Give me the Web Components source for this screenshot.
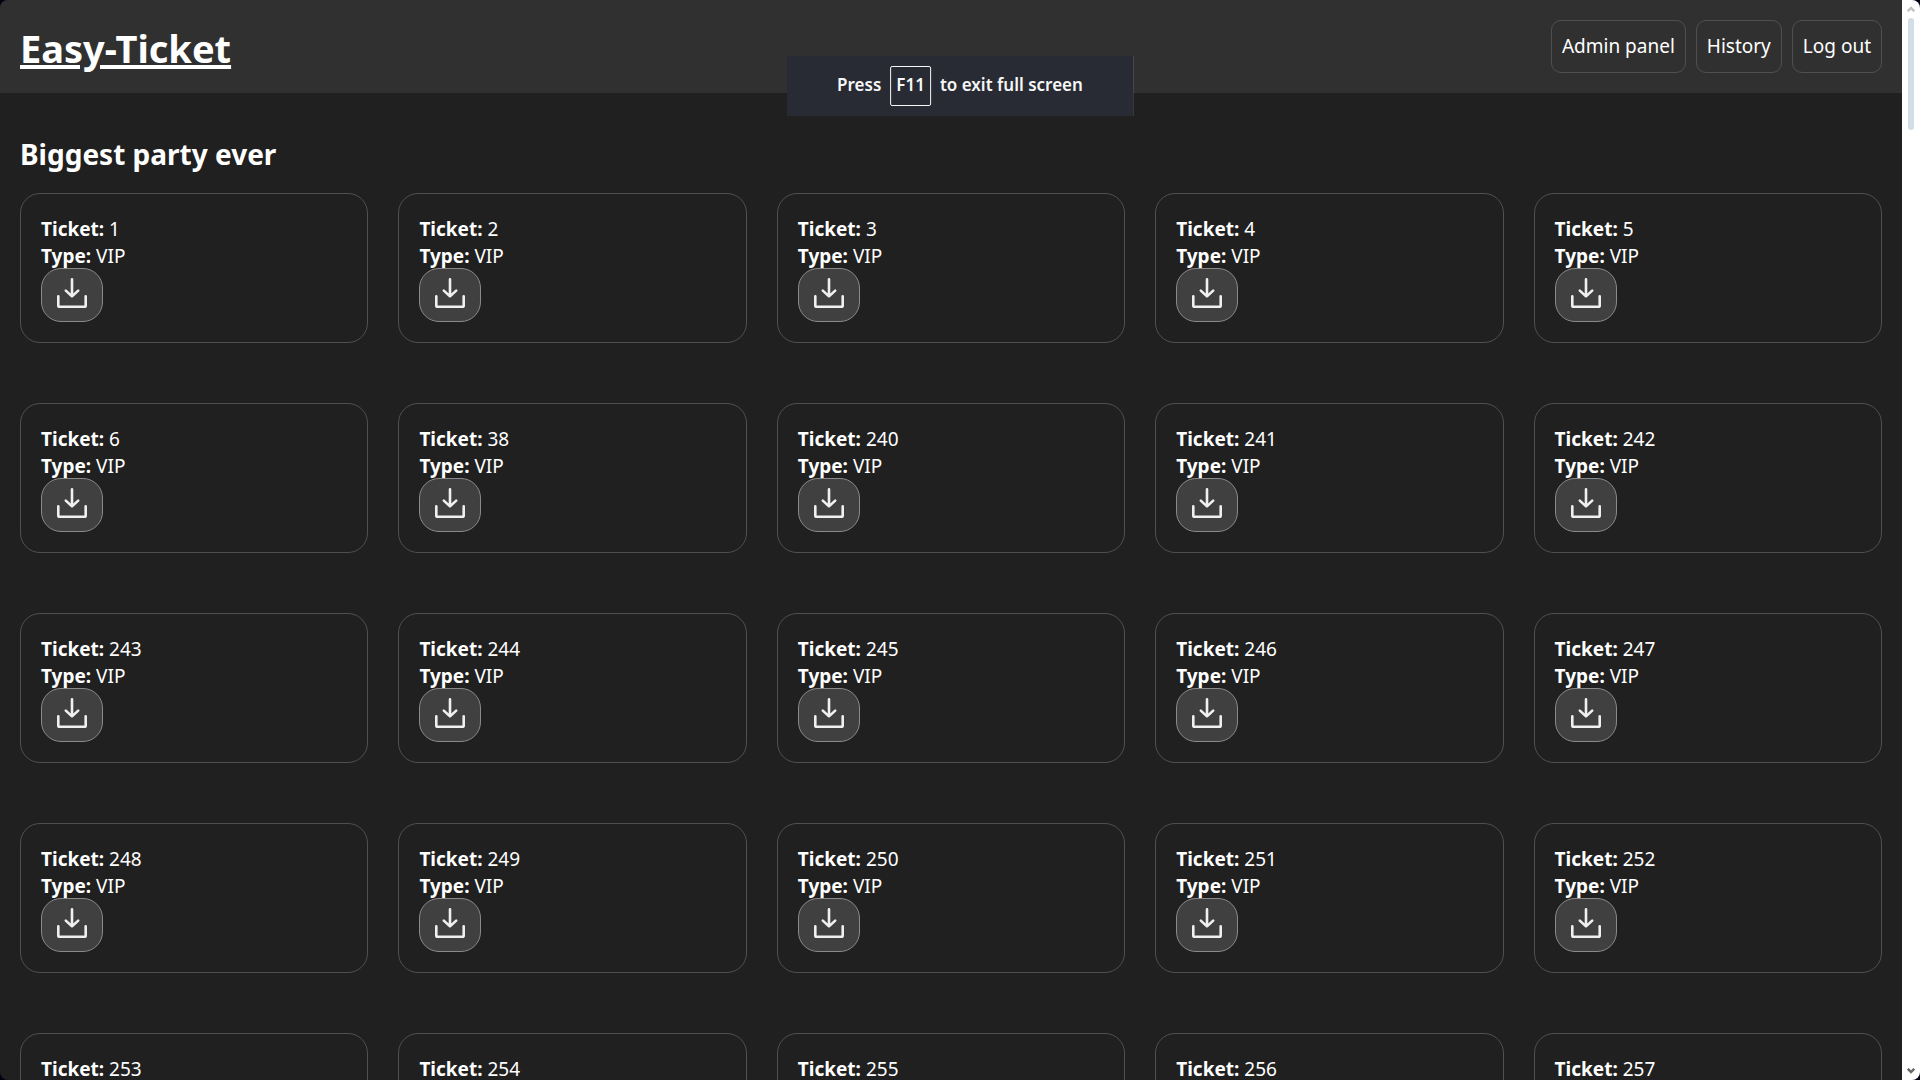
<!DOCTYPE html>
<html lang="en">
<head>
<meta charset="utf-8">
<title>Easy-Ticket</title>
<style>
  html { background: #00000f; }
  body { margin: 0; font: 19px/27px "Noto Sans", "Open Sans", sans-serif; color: #fff; }
</style>
</head>
<body>
<ticket-app></ticket-app>

<template id="app-template">
  <style>
    :host { display: flex; height: 100vh; overflow: hidden; border-radius: 8px; background: #202020; }
    .view { flex: 1; min-width: 0; overflow-y: auto; scrollbar-width: none; }
    main { padding: 40px 20px; }
  </style>
  <div class="view">
    <site-header>
      <nav-link slot="nav">Admin panel</nav-link>
      <nav-link slot="nav">History</nav-link>
      <nav-link slot="nav">Log out</nav-link>
    </site-header>
    <main>
      <event-tickets type="VIP" numbers="1 2 3 4 5 6 38 240 241 242 243 244 245 246 247 248 249 250 251 252 253 254 255 256 257">Biggest party ever</event-tickets>
    </main>
  </div>
  <scroll-rail></scroll-rail>
  <fullscreen-notice></fullscreen-notice>
</template>

<template id="header-template">
  <style>
    :host { display: block; }
    header { display: flex; justify-content: space-between; align-items: flex-start; padding: 20px 20px 16px; background: #303030; }
    a { font-size: 38px; line-height: 57px; font-weight: 700; color: #fff; text-decoration: underline; text-decoration-thickness: 4px; text-underline-offset: 2px; }
    nav { display: flex; gap: 10px; }
  </style>
  <header>
    <a href="#">Easy-Ticket</a>
    <nav><slot name="nav"></slot></nav>
  </header>
</template>

<template id="nav-link-template">
  <style>
    :host { display: block; }
    a { display: block; padding: 12px 10px; border: 1px solid #505050; border-radius: 10px; color: #fff; text-decoration: none; white-space: nowrap; }
  </style>
  <a href="#"><slot></slot></a>
</template>

<template id="event-template">
  <style>
    :host { display: block; }
    h2 { margin: 0 0 18px; font-size: 28px; line-height: 42px; font-weight: 700; }
    .grid { display: grid; grid-template-columns: repeat(5, minmax(0, 1fr)); gap: 60px 30px; }
  </style>
  <h2><slot></slot></h2>
  <div class="grid"></div>
</template>

<template id="card-template">
  <style>
    :host { display: block; padding: 22px 20px 20px; border: 1px solid #505050; border-radius: 20px; }
    p { margin: 0; }
    button { display: block; margin: -2px 0 0; padding: 9px 15px 13px; border: 1px solid #8a8a8a; border-radius: 20px; background: #404040; color: #f0f0f0; }
    svg { display: block; }
  </style>
  <p><b>Ticket:</b> <slot></slot></p>
  <p><b>Type:</b> <slot name="type"></slot></p>
  <button type="button" aria-label="Download ticket">
    <svg width="30" height="30" viewBox="0 0 30 30" fill="none" stroke="currentColor" stroke-width="2.6" stroke-linecap="round" stroke-linejoin="round">
      <path d="M15 1.4V18.2M8.8 12.6L15 18.4L21.2 12.6"/>
      <path d="M1.3 18.4V27.4Q1.3 28.7 2.6 28.7H27.4Q28.7 28.7 28.7 27.4V18.4"/>
    </svg>
  </button>
</template>

<template id="rail-template">
  <style>
    :host { display: flex; flex-direction: column; align-items: center; justify-content: space-between; width: 18px; box-sizing: border-box; padding: 6px 0; background: #fff; }
    .top { display: flex; flex-direction: column; align-items: center; gap: 6px; }
    .thumb { width: 6px; height: 112px; border-radius: 3px; background: #d2dde5; }
    svg { display: block; }
  </style>
  <div class="top">
    <svg width="8" height="6" viewBox="0 0 8 6" fill="none" stroke="#c1c1c1" stroke-width="2.4"><path d="M.8 5.2L4 2L7.2 5.2"/></svg>
    <div class="thumb"></div>
  </div>
  <svg width="8" height="6" viewBox="0 0 8 6" fill="none" stroke="#686868" stroke-width="2.4"><path d="M.8 .8L4 4L7.2 .8"/></svg>
</template>

<template id="notice-template">
  <style>
    :host { position: fixed; top: 56px; left: 50%; transform: translateX(-50%); display: flex; align-items: center; gap: 9px; padding: 10px 50px; background: #282b33; font-size: 17px; line-height: 26px; font-weight: 600; white-space: nowrap; color: #f7f7f7; }
    span { padding-bottom: 2px; }
    kbd { box-sizing: border-box; min-width: 40px; padding: 5px 5px 7px; border: 1px solid #f7f7f7; border-radius: 2px; font: inherit; text-align: center; }
  </style>
  <span>Press</span><kbd>F11</kbd><span>to exit full screen</span>
</template>

<script>
  const define = (name, templateId, setup) => customElements.define(name, class extends HTMLElement {
    constructor() {
      super();
      this.attachShadow({ mode: 'open' }).append(document.getElementById(templateId).content.cloneNode(true));
    }
    connectedCallback() { if (setup) setup(this); }
  });

  define('ticket-card', 'card-template');
  define('nav-link', 'nav-link-template');
  define('site-header', 'header-template');
  define('event-tickets', 'event-template', host => {
    host.shadowRoot.querySelector('.grid').replaceChildren(...host.getAttribute('numbers').split(' ').map(number => {
      const card = document.createElement('ticket-card');
      const type = document.createElement('span');
      type.slot = 'type';
      type.textContent = host.getAttribute('type');
      card.append(number, type);
      return card;
    }));
  });
  define('scroll-rail', 'rail-template');
  define('fullscreen-notice', 'notice-template');
  define('ticket-app', 'app-template');
</script>
</body>
</html>
